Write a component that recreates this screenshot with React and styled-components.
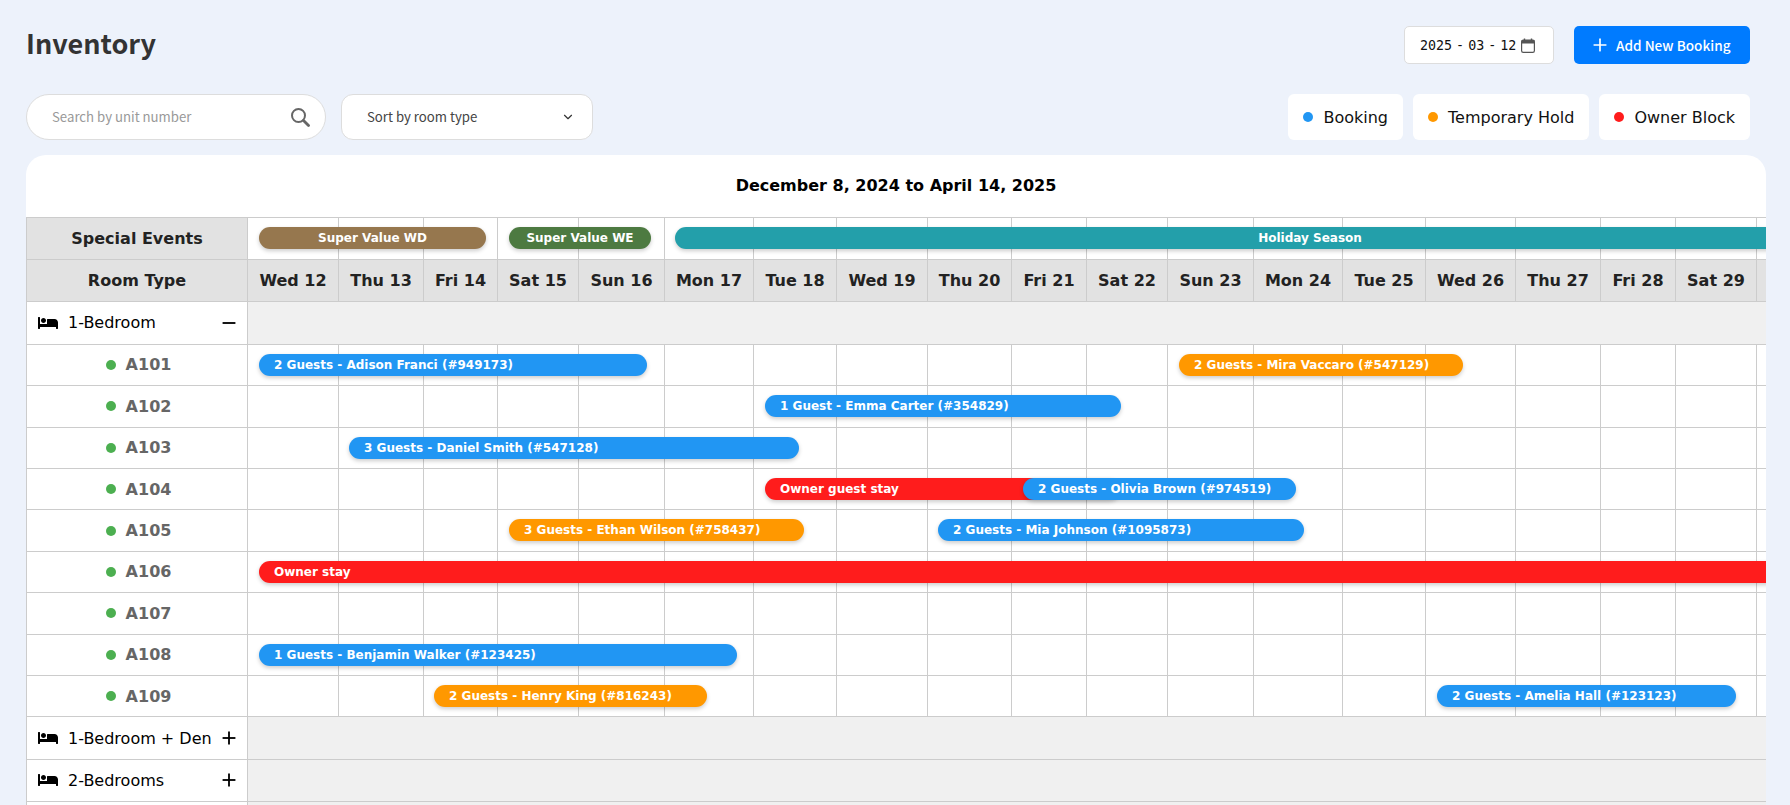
import React from 'react'
import styled, { createGlobalStyle } from 'styled-components'
import { FaBed } from 'react-icons/fa'
import { Plus, Minus, ChevronDown } from 'lucide-react'

const TABLE_LEFT = 27
const COLS = [221, 91, 85, 74, 81, 86, 89, 83, 91, 84, 75, 81, 86, 89, 83, 90, 85, 75, 81, 87]
// last column only shows a sliver before the card clips it, so no label there
const DAYS = ['Wed 12', 'Thu 13', 'Fri 14', 'Sat 15', 'Sun 16', 'Mon 17', 'Tue 18', 'Wed 19', 'Thu 20', 'Fri 21', 'Sat 22', 'Sun 23', 'Mon 24', 'Tue 25', 'Wed 26', 'Thu 27', 'Fri 28', 'Sat 29', '']

const COLORS = { blue: '#2196f3', orange: '#ff9800', red: '#ff1c1c' }

const UNITS = [
  { name: 'A101', bars: [
    { from: 259, to: 647, color: 'blue', label: '2 Guests - Adison Franci (#949173)' },
    { from: 1179, to: 1463, color: 'orange', label: '2 Guests - Mira Vaccaro (#547129)' },
  ] },
  { name: 'A102', bars: [{ from: 765, to: 1121, color: 'blue', label: '1 Guest - Emma Carter (#354829)' }] },
  { name: 'A103', bars: [{ from: 349, to: 799, color: 'blue', label: '3 Guests - Daniel Smith (#547128)' }] },
  { name: 'A104', bars: [
    { from: 765, to: 1120, color: 'red', label: 'Owner guest stay' },
    { from: 1023, to: 1296, color: 'blue', label: '2 Guests - Olivia Brown (#974519)' },
  ] },
  { name: 'A105', bars: [
    { from: 509, to: 804, color: 'orange', label: '3 Guests - Ethan Wilson (#758437)' },
    { from: 938, to: 1304, color: 'blue', label: '2 Guests - Mia Johnson (#1095873)' },
  ] },
  { name: 'A106', bars: [{ from: 259, to: 2100, color: 'red', label: 'Owner stay' }] },
  { name: 'A107', bars: [] },
  { name: 'A108', bars: [{ from: 259, to: 737, color: 'blue', label: '1 Guests - Benjamin Walker (#123425)' }] },
  { name: 'A109', bars: [
    { from: 434, to: 707, color: 'orange', label: '2 Guests - Henry King (#816243)' },
    { from: 1437, to: 1736, color: 'blue', label: '2 Guests - Amelia Hall (#123123)' },
  ] },
]

const EVENTS = [
  { from: 259, to: 486, color: '#96774e', label: 'Super Value WD' },
  { from: 509, to: 651, color: '#4d7a41', label: 'Super Value WE' },
  { from: 675, to: 1945, color: '#239faa', label: 'Holiday Season' },
]

const GlobalStyle = createGlobalStyle`
  html, body {
    margin: 0;
    height: 805px;
    overflow: hidden;
    background: #edf2fb;
    font-family: "DejaVu Sans", sans-serif;
  }
`

const Page = styled.div`
  height: 805px;
  box-sizing: border-box;
  overflow: hidden;
  padding: 26px 24px 0 26px;
`

const TopBar = styled.div`
  display: flex;
  align-items: center;
  justify-content: space-between;
  height: 38px;
  padding-right: 16px;
`

const Title = styled.h1`
  margin: 0;
  padding-bottom: 5px;
  font-family: "Noto Sans CJK SC", "Noto Sans", sans-serif;
  font-size: 27px;
  font-weight: 700;
  color: #333;
`

const TopActions = styled.div`
  display: flex;
  gap: 20px;
`

const DateBox = styled.div`
  box-sizing: border-box;
  width: 150px;
  height: 38px;
  display: flex;
  align-items: center;
  padding-left: 15px;
  gap: 5px;
  background: #fff;
  border: 1px solid #ddd;
  border-radius: 5px;
  font-family: "DejaVu Sans Mono", monospace;
  font-size: 13.33px;
  word-spacing: -4px;
  color: #111;
`

const AddButton = styled.button`
  width: 176px;
  height: 38px;
  display: flex;
  align-items: center;
  gap: 6px;
  padding: 0 0 0 16px;
  border: 0;
  border-radius: 5px;
  background: #007bff;
  color: #fff;
  font-family: "Noto Sans CJK SC", "Noto Sans", sans-serif;
  font-size: 13.6px;
  font-weight: 500;
`

const ToolBar = styled.div`
  display: flex;
  align-items: center;
  margin-top: 30px;
  height: 46px;
  padding-right: 16px;
`

const Search = styled.div`
  box-sizing: border-box;
  width: 300px;
  height: 46px;
  display: flex;
  align-items: center;
  justify-content: space-between;
  padding: 0 15px 0 25px;
  background: #fff;
  border: 1px solid #ddd;
  border-radius: 23px;
  color: #999;
  font-family: "Noto Sans CJK SC", "Noto Sans", sans-serif;
  font-size: 13.2px;
  svg { color: #666; }
`

const SortSelect = styled.div`
  box-sizing: border-box;
  width: 252px;
  height: 46px;
  margin-left: 15px;
  display: flex;
  align-items: center;
  justify-content: space-between;
  padding: 0 17px 0 25px;
  background: #fff;
  border: 1px solid #ddd;
  border-radius: 12px;
  color: #444;
  font-family: "Noto Sans CJK SC", "Noto Sans", sans-serif;
  font-size: 13.2px;
`

const FieldText = styled.span`
  padding-bottom: 2px;
`

const Legend = styled.div`
  margin-left: auto;
  display: flex;
  gap: 10px;
`

const LegendItem = styled.div`
  height: 46px;
  display: flex;
  align-items: center;
  gap: 10px;
  padding: 0 15px;
  background: #fff;
  border-radius: 6px;
  font-size: 16px;
  color: #111;
`

const Dot = styled.span`
  width: 10px;
  height: 10px;
  border-radius: 50%;
  flex: none;
  background: ${(p) => p.$color};
`

const Card = styled.div`
  margin-top: 15px;
  background: #fff;
  border-radius: 20px 20px 0 0;
  overflow: hidden;
  height: 650px;
`

const CardTitle = styled.div`
  height: 62px;
  display: flex;
  align-items: center;
  justify-content: center;
  padding-bottom: 1px;
  box-sizing: border-box;
  font-size: 16px;
  font-weight: 700;
  color: #000;
`

const Table = styled.div`
  width: max-content;
  border-top: 1px solid #ccc;
  border-left: 1px solid #ccc;
`

const Row = styled.div`
  position: relative;
  display: grid;
  grid-template-columns: ${COLS.map((c) => c + 'px').join(' ')};
  height: ${(p) => p.$height}px;
`

const Cell = styled.div`
  box-sizing: border-box;
  border-right: 1px solid #ccc;
  border-bottom: 1px solid #ccc;
`

const HeadCell = styled(Cell)`
  display: flex;
  align-items: center;
  justify-content: center;
  background: #e2e2e2;
  font-size: 16px;
  font-weight: 700;
  color: #222;
`

const GroupCell = styled(Cell)`
  display: flex;
  align-items: center;
  padding: 0 7px 0 11px;
  font-size: 16px;
  color: #000;
  white-space: nowrap;
  svg { flex: none; }
`

const GroupLabel = styled.span`
  flex: 1;
  min-width: 0;
  margin-left: 10px;
`

const GroupFill = styled(Cell)`
  grid-column: 2 / -1;
  background: #f0f0f0;
`

const UnitCell = styled(Cell)`
  display: flex;
  align-items: center;
  justify-content: center;
  gap: 10px;
  padding-left: 3px;
  font-size: 16px;
  font-weight: 700;
  color: #666;
`

const Bar = styled.div`
  position: absolute;
  top: 9px;
  left: ${(p) => p.$from - TABLE_LEFT}px;
  width: ${(p) => p.$to - p.$from}px;
  height: 22px;
  box-sizing: border-box;
  display: flex;
  align-items: center;
  padding-left: 15px;
  background: ${(p) => p.$color};
  border-radius: 11px;
  box-shadow: 0 2px 4px rgba(0, 0, 0, 0.2);
  color: #fff;
  font-size: 12px;
  font-weight: 700;
  white-space: nowrap;
`

const EventBar = styled(Bar)`
  justify-content: center;
  padding-left: 0;
`

const GroupRow = ({ label, height, open }) => (
  <Row $height={height}>
    <GroupCell>
      <FaBed size={20} />
      <GroupLabel>{label}</GroupLabel>
      {open
        ? <Minus size={22} strokeLinecap="butt" />
        : <Plus size={22} strokeLinecap="butt" />}
    </GroupCell>
    <GroupFill />
  </Row>
)

const SearchIcon = () => (
  <svg width="20" height="20" viewBox="0 0 20 20" fill="none" stroke="currentColor">
    <circle cx="8.5" cy="8.5" r="6.5" strokeWidth="2" />
    <path d="M13.5 13.5 L18.5 18.5" strokeWidth="2.8" strokeLinecap="round" />
  </svg>
)

const CalendarIcon = () => (
  <svg width="14" height="15" viewBox="0 0 14 15" fill="none">
    <rect x="0.6" y="2.1" width="12.8" height="12.3" rx="1.6" stroke="#555" strokeWidth="1.2" />
    <rect x="0.6" y="2.1" width="12.8" height="3.4" fill="#555" />
    <path d="M3.5 0.5 V3 M10.5 0.5 V3" stroke="#555" strokeWidth="1.4" />
  </svg>
)

export default function App() {
  return (
    <Page>
      <GlobalStyle />
      <TopBar>
        <Title>Inventory</Title>
        <TopActions>
          <DateBox>
            2025 - 03 - 12
            <CalendarIcon />
          </DateBox>
          <AddButton><Plus size={20} />Add New Booking</AddButton>
        </TopActions>
      </TopBar>

      <ToolBar>
        <Search><FieldText>Search by unit number</FieldText><SearchIcon /></Search>
        <SortSelect><FieldText>Sort by room type</FieldText><ChevronDown size={14} color="#333" /></SortSelect>
        <Legend>
          <LegendItem><Dot $color={COLORS.blue} />Booking</LegendItem>
          <LegendItem><Dot $color={COLORS.orange} />Temporary Hold</LegendItem>
          <LegendItem><Dot $color={COLORS.red} />Owner Block</LegendItem>
        </Legend>
      </ToolBar>

      <Card>
        <CardTitle>December 8, 2024 to April 14, 2025</CardTitle>
        <Table>
          <Row $height={42}>
            <HeadCell>Special Events</HeadCell>
            {DAYS.map((d) => <Cell key={d} />)}
            {EVENTS.map((e) => (
              <EventBar key={e.label} $from={e.from} $to={e.to} $color={e.color}>{e.label}</EventBar>
            ))}
          </Row>
          <Row $height={42}>
            <HeadCell>Room Type</HeadCell>
            {DAYS.map((d) => <HeadCell key={d}>{d}</HeadCell>)}
          </Row>
          <GroupRow label="1-Bedroom" height={42.8} open />
          {UNITS.map((u) => (
            <Row key={u.name} $height={41.4}>
              <UnitCell><Dot $color="#4caf50" />{u.name}</UnitCell>
              {DAYS.map((d) => <Cell key={d} />)}
              {u.bars.map((b) => (
                <Bar key={b.label} $from={b.from} $to={b.to} $color={COLORS[b.color]}>{b.label}</Bar>
              ))}
            </Row>
          ))}
          <GroupRow label="1-Bedroom + Den" height={42.6} />
          <GroupRow label="2-Bedrooms" height={42} />
          <GroupRow label="" height={42} />
        </Table>
      </Card>
    </Page>
  )
}
